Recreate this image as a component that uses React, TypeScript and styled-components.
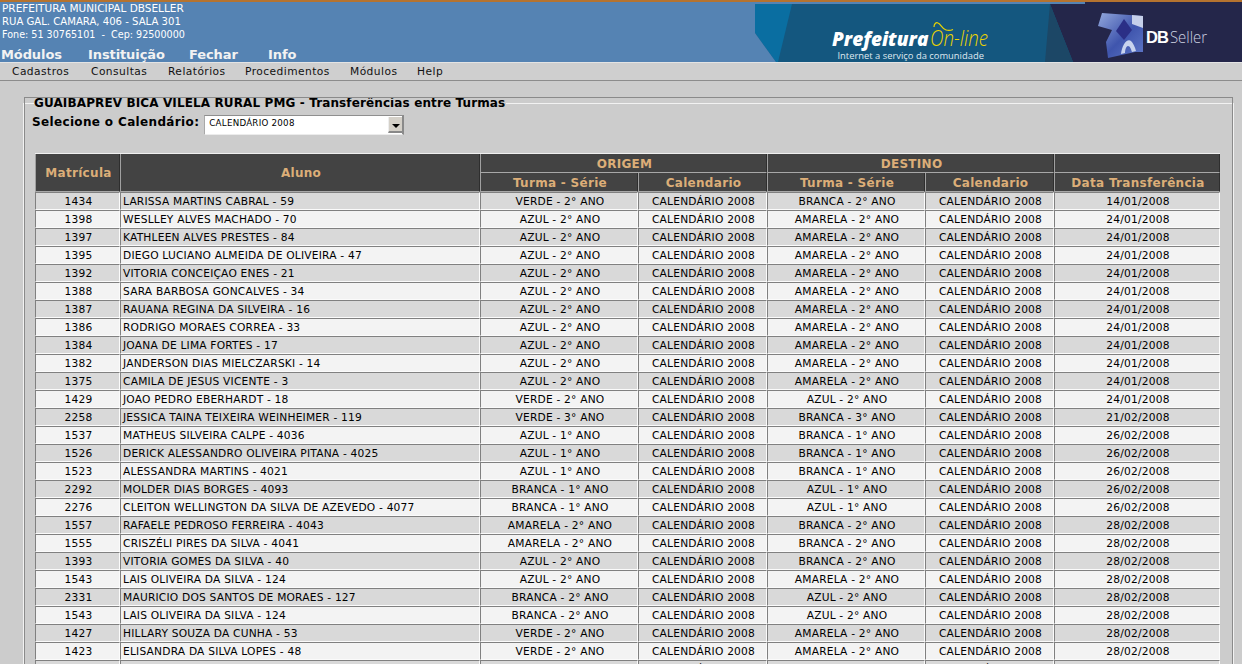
import styled, { createGlobalStyle } from "styled-components";

type Row = [string, string, string, string, string];

const CAL = "CALENDÁRIO 2008";

const rows: Row[] = [
  ["1434", "LARISSA MARTINS CABRAL - 59", "VERDE - 2° ANO", "BRANCA - 2° ANO", "14/01/2008"],
  ["1398", "WESLLEY ALVES MACHADO - 70", "AZUL - 2° ANO", "AMARELA - 2° ANO", "24/01/2008"],
  ["1397", "KATHLEEN ALVES PRESTES - 84", "AZUL - 2° ANO", "AMARELA - 2° ANO", "24/01/2008"],
  ["1395", "DIEGO LUCIANO ALMEIDA DE OLIVEIRA - 47", "AZUL - 2° ANO", "AMARELA - 2° ANO", "24/01/2008"],
  ["1392", "VITORIA CONCEIÇAO ENES - 21", "AZUL - 2° ANO", "AMARELA - 2° ANO", "24/01/2008"],
  ["1388", "SARA BARBOSA GONCALVES - 34", "AZUL - 2° ANO", "AMARELA - 2° ANO", "24/01/2008"],
  ["1387", "RAUANA REGINA DA SILVEIRA - 16", "AZUL - 2° ANO", "AMARELA - 2° ANO", "24/01/2008"],
  ["1386", "RODRIGO MORAES CORREA - 33", "AZUL - 2° ANO", "AMARELA - 2° ANO", "24/01/2008"],
  ["1384", "JOANA DE LIMA FORTES - 17", "AZUL - 2° ANO", "AMARELA - 2° ANO", "24/01/2008"],
  ["1382", "JANDERSON DIAS MIELCZARSKI - 14", "AZUL - 2° ANO", "AMARELA - 2° ANO", "24/01/2008"],
  ["1375", "CAMILA DE JESUS VICENTE - 3", "AZUL - 2° ANO", "AMARELA - 2° ANO", "24/01/2008"],
  ["1429", "JOAO PEDRO EBERHARDT - 18", "VERDE - 2° ANO", "AZUL - 2° ANO", "24/01/2008"],
  ["2258", "JESSICA TAINA TEIXEIRA WEINHEIMER - 119", "VERDE - 3° ANO", "BRANCA - 3° ANO", "21/02/2008"],
  ["1537", "MATHEUS SILVEIRA CALPE - 4036", "AZUL - 1° ANO", "BRANCA - 1° ANO", "26/02/2008"],
  ["1526", "DERICK ALESSANDRO OLIVEIRA PITANA - 4025", "AZUL - 1° ANO", "BRANCA - 1° ANO", "26/02/2008"],
  ["1523", "ALESSANDRA MARTINS - 4021", "AZUL - 1° ANO", "BRANCA - 1° ANO", "26/02/2008"],
  ["2292", "MOLDER DIAS BORGES - 4093", "BRANCA - 1° ANO", "AZUL - 1° ANO", "26/02/2008"],
  ["2276", "CLEITON WELLINGTON DA SILVA DE AZEVEDO - 4077", "BRANCA - 1° ANO", "AZUL - 1° ANO", "26/02/2008"],
  ["1557", "RAFAELE PEDROSO FERREIRA - 4043", "AMARELA - 2° ANO", "BRANCA - 2° ANO", "28/02/2008"],
  ["1555", "CRISZÉLI PIRES DA SILVA - 4041", "AMARELA - 2° ANO", "BRANCA - 2° ANO", "28/02/2008"],
  ["1393", "VITORIA GOMES DA SILVA - 40", "AZUL - 2° ANO", "BRANCA - 2° ANO", "28/02/2008"],
  ["1543", "LAIS OLIVEIRA DA SILVA - 124", "AZUL - 2° ANO", "AMARELA - 2° ANO", "28/02/2008"],
  ["2331", "MAURICIO DOS SANTOS DE MORAES - 127", "BRANCA - 2° ANO", "AZUL - 2° ANO", "28/02/2008"],
  ["1543", "LAIS OLIVEIRA DA SILVA - 124", "BRANCA - 2° ANO", "AZUL - 2° ANO", "28/02/2008"],
  ["1427", "HILLARY SOUZA DA CUNHA - 53", "VERDE - 2° ANO", "AMARELA - 2° ANO", "28/02/2008"],
  ["1423", "ELISANDRA DA SILVA LOPES - 48", "VERDE - 2° ANO", "AMARELA - 2° ANO", "28/02/2008"],
  ["", "", "", "", ""],
];

const menus = [
  { label: "Cadastros", width: 79 },
  { label: "Consultas", width: 77 },
  { label: "Relatórios", width: 77 },
  { label: "Procedimentos", width: 105 },
  { label: "Módulos", width: 67 },
  { label: "Help", width: 40 },
];
const topLinks = [
  { label: "Módulos", width: 87 },
  { label: "Instituição", width: 101 },
  { label: "Fechar", width: 79 },
  { label: "Info", width: 60 },
];

const GlobalStyle = createGlobalStyle`
  html, body {
    margin: 0;
    padding: 0;
    height: 664px;
    overflow: hidden;
    background: #cccccc;
    font-family: "DejaVu Sans", sans-serif;
  }
`;

const Page = styled.div`
  width: 1242px;
  height: 664px;
  overflow: hidden;
  display: flex;
  flex-direction: column;
`;

const Header = styled.header`
  height: 60px;
  border-top: 2px solid #b5732f;
  background: #5583b3;
  display: flex;
  justify-content: space-between;
  flex-shrink: 0;
  overflow: hidden;
`;

const Address = styled.div`
  padding: 0 0 0 2px;
  color: #fff;
  white-space: pre;
`;

const AddressLine = styled.div<{ $size: number }>`
  font-size: ${(p) => p.$size}px;
  line-height: 13px;
`;

const TopNav = styled.nav`
  display: flex;
  margin-top: 7px;
  padding-left: 1px;
`;

const TopLink = styled.span<{ $w: number }>`
  width: ${(p) => p.$w}px;
  color: #f2f2f2;
  font-size: 13px;
  font-weight: bold;
  letter-spacing: -0.1px;
  line-height: 13px;
`;

const Banner = styled.svg`
  width: 502px;
  height: 60px;
  display: block;
  flex-shrink: 0;
`;

const MenuBar = styled.nav`
  height: 17px;
  flex-shrink: 0;
  display: flex;
  padding-left: 12px;
  align-items: center;
  background: #cfcfcf;
  border-top: 1px solid #e4e4e4;
  border-bottom: 1px solid #8c8c8c;
`;

const MenuItem = styled.span<{ $w: number }>`
  width: ${(p) => p.$w}px;
  font-size: 10.67px;
  letter-spacing: 0.45px;
  color: #111;
`;

const Field = styled.fieldset`
  margin: 15px 0 0 23px;
  width: 1211px;
  box-sizing: border-box;
  padding: 0 11px;
  border: 1px solid #f2f2f2;
  outline: 1px solid #8a8a8a;
  outline-offset: -2px;
  min-width: 0;
`;

const Legend = styled.legend`
  padding: 0 1px 0 0;
  margin-left: -1px;
  font-size: 12px;
  letter-spacing: 0.12px;
  font-weight: bold;
  color: #000;
  line-height: 14px;
  white-space: nowrap;
`;

const CalendarRow = styled.div`
  display: flex;
  align-items: flex-start;
  gap: 5px;
  margin: 0 0 0 -3px;
  height: 20px;
  padding-top: 5px;
`;

const CalendarLabel = styled.label`
  font-size: 12px;
  letter-spacing: 0.35px;
  font-weight: bold;
  line-height: 14px;
  color: #000;
`;

const Select = styled.div`
  width: 200px;
  height: 20px;
  box-sizing: border-box;
  background: #fff;
  border-top: 1px solid #8f8f8f;
  border-left: 1px solid #a8a8a8;
  border-right: 2px solid #8a8a8a;
  border-bottom: 1px solid #ececec;
  display: flex;
  justify-content: space-between;
  padding-left: 4px;
  font-size: 8.7px;
  letter-spacing: 0.25px;
  line-height: 15px;
`;

const SelectArrow = styled.span`
  width: 14px;
  height: 16px;
  margin-top: 1px;
  background: #d4d0c8;
  border-left: 1px solid #eee;
  border-bottom: 2px solid #888;
  display: flex;
  align-items: center;
  justify-content: center;
  box-sizing: border-box;
  &::after {
    content: "";
    border-left: 4px solid transparent;
    border-right: 4px solid transparent;
    border-top: 4px solid #000;
    margin-top: 3px;
  }
`;

const Table = styled.table`
  margin-top: 18px;
  border-collapse: separate;
  border-spacing: 0;
  table-layout: fixed;
  width: 1185px;
  border-top: 1px solid #f0f0f0;
`;

const Th = styled.th`
  background: #434343;
  color: #dcae78;
  font-size: 12px;
  font-weight: bold;
  letter-spacing: 0.3px;
  padding: 1px 0 0 2px;
  height: 19px;
  box-sizing: border-box;
  text-align: center;
  border-left: 1px solid #a0a0a0;
  border-bottom: 1px solid #a8a8a8;
  border-right: 1px solid #2e2e2e;
  white-space: nowrap;
`;

const Td = styled.td<{ $even: boolean; $left?: boolean }>`
  background: ${(p) => (p.$even ? "#d9d9d9" : "#f3f3f3")};
  color: #000;
  font-size: 10.67px;
  letter-spacing: 0.2px;
  height: 18px;
  box-sizing: border-box;
  padding: 0 ${(p) => (p.$left ? "2px" : "0 0 2px")};
  text-align: ${(p) => (p.$left ? "left" : "center")};
  border-left: 1px solid #808080;
  border-top: 1px solid #808080;
  border-bottom: 1px solid #fbfbfb;
  border-right: 1px solid #fbfbfb;
  white-space: nowrap;
  overflow: hidden;
`;

const colWidths = [85, 360, 158, 129, 158, 129, 166];

export default function App() {
  return (
    <Page>
      <GlobalStyle />
      <Header>
        <div>
          <Address>
            <AddressLine $size={10.5}>PREFEITURA MUNICIPAL DBSELLER</AddressLine>
            <AddressLine $size={10.1}>RUA GAL. CAMARA, 406 - SALA 301</AddressLine>
            <AddressLine $size={9.6}>Fone: 51 30765101{"  -  "}Cep: 92500000</AddressLine>
          </Address>
          <TopNav>
            {topLinks.map((l) => (
              <TopLink $w={l.width} key={l.label}>
                {l.label}
              </TopLink>
            ))}
          </TopNav>
        </div>
        <Banner viewBox="0 0 502 60">
          <defs>
            <linearGradient id="block" x1="0" y1="0" x2="1" y2="1">
              <stop offset="0" stopColor="#93a8dc" />
              <stop offset="0.55" stopColor="#3f55ad" />
              <stop offset="1" stopColor="#5f78c8" />
            </linearGradient>
          </defs>
          <rect x="0" y="0" width="502" height="60" fill="#5583b3" />
          <rect x="15" y="2" width="487" height="58" fill="#14577f" />
          <polygon points="15,2 52,2 38,60 36,60 15,31" fill="#0a6ea1" />
          <polygon points="15,31 36,60 15,60" fill="#5583b3" />
          <polygon points="310,2 345,2 345,0 502,0 502,60 333,60" fill="#24264a" />
          <polygon points="310,2 333,60 305,60" fill="#1c4766" />
          <text x="92" y="44" fill="#fff" fontFamily="'Open Sans', sans-serif" fontStyle="italic" fontWeight="800" fontSize="19">
            Prefeitura
          </text>
          <text
            x="190"
            y="44"
            fill="#ecd400"
            fontFamily="'Open Sans', sans-serif"
            fontStyle="italic"
            fontWeight="300"
            fontSize="22"
            textLength={58}
            lengthAdjust="spacingAndGlyphs"
          >
            On-line
          </text>
          <path d="M194 25c0-3 2-5 4-4 3 1 4 6 8 7 2 .6 5 .4 7-.5" fill="none" stroke="#ecd400" strokeWidth="1.2" />
          <text x="97.5" y="57" fill="#dfe8ef" fontFamily="'Open Sans', sans-serif" fontSize="9.4">
            Internet a serviço da comunidade
          </text>
          <polygon points="358,24 362,11 403,14 403,50 395,50 368,56 366,40 372,28" fill="url(#block)" />
          <polygon points="384,17 392,28 384,38 376,29" fill="#2b2f86" />
          <path d="M381 52c1-9 6-16 10-13 2 2 4 6 5 10l-4 1c-1-3-2-6-4-6-2 0-3 4-3 7z" fill="#c9d4ee" />
          <polygon points="392,13 403,14 403,26 392,22" fill="#c6d0ea" />
          <text x="406" y="41" fill="#fff" fontFamily="'Liberation Sans', sans-serif" fontWeight="bold" fontSize="16.5" letterSpacing="-1">
            DB
          </text>
          <text
            x="430"
            y="41"
            fill="#cfd3e2"
            fontFamily="'Open Sans', sans-serif"
            fontWeight="300"
            fontSize="16"
            textLength={37}
            lengthAdjust="spacingAndGlyphs"
          >
            Seller
          </text>
        </Banner>
      </Header>
      <MenuBar>
        {menus.map((m) => (
          <MenuItem $w={m.width} key={m.label}>
            {m.label}
          </MenuItem>
        ))}
      </MenuBar>
      <Field>
        <Legend>GUAIBAPREV BICA VILELA RURAL PMG - Transferências entre Turmas</Legend>
        <CalendarRow>
          <CalendarLabel>Selecione o Calendário:</CalendarLabel>
          <Select>
            {CAL}
            <SelectArrow />
          </Select>
        </CalendarRow>
        <Table>
          <colgroup>
            {colWidths.map((w, i) => (
              <col key={i} style={{ width: w }} />
            ))}
          </colgroup>
          <thead>
            <tr>
              <Th rowSpan={2}>Matrícula</Th>
              <Th rowSpan={2}>Aluno</Th>
              <Th colSpan={2}>ORIGEM</Th>
              <Th colSpan={2}>DESTINO</Th>
              <Th />
            </tr>
            <tr>
              <Th>Turma - Série</Th>
              <Th>Calendario</Th>
              <Th>Turma - Série</Th>
              <Th>Calendario</Th>
              <Th>Data Transferência</Th>
            </tr>
          </thead>
          <tbody>
            {rows.map((r, i) => (
              <tr key={i}>
                <Td $even={i % 2 === 0}>{r[0]}</Td>
                <Td $even={i % 2 === 0} $left>
                  {r[1]}
                </Td>
                <Td $even={i % 2 === 0}>{r[2]}</Td>
                <Td $even={i % 2 === 0}>{CAL}</Td>
                <Td $even={i % 2 === 0}>{r[3]}</Td>
                <Td $even={i % 2 === 0}>{CAL}</Td>
                <Td $even={i % 2 === 0}>{r[4]}</Td>
              </tr>
            ))}
          </tbody>
        </Table>
      </Field>
    </Page>
  );
}
